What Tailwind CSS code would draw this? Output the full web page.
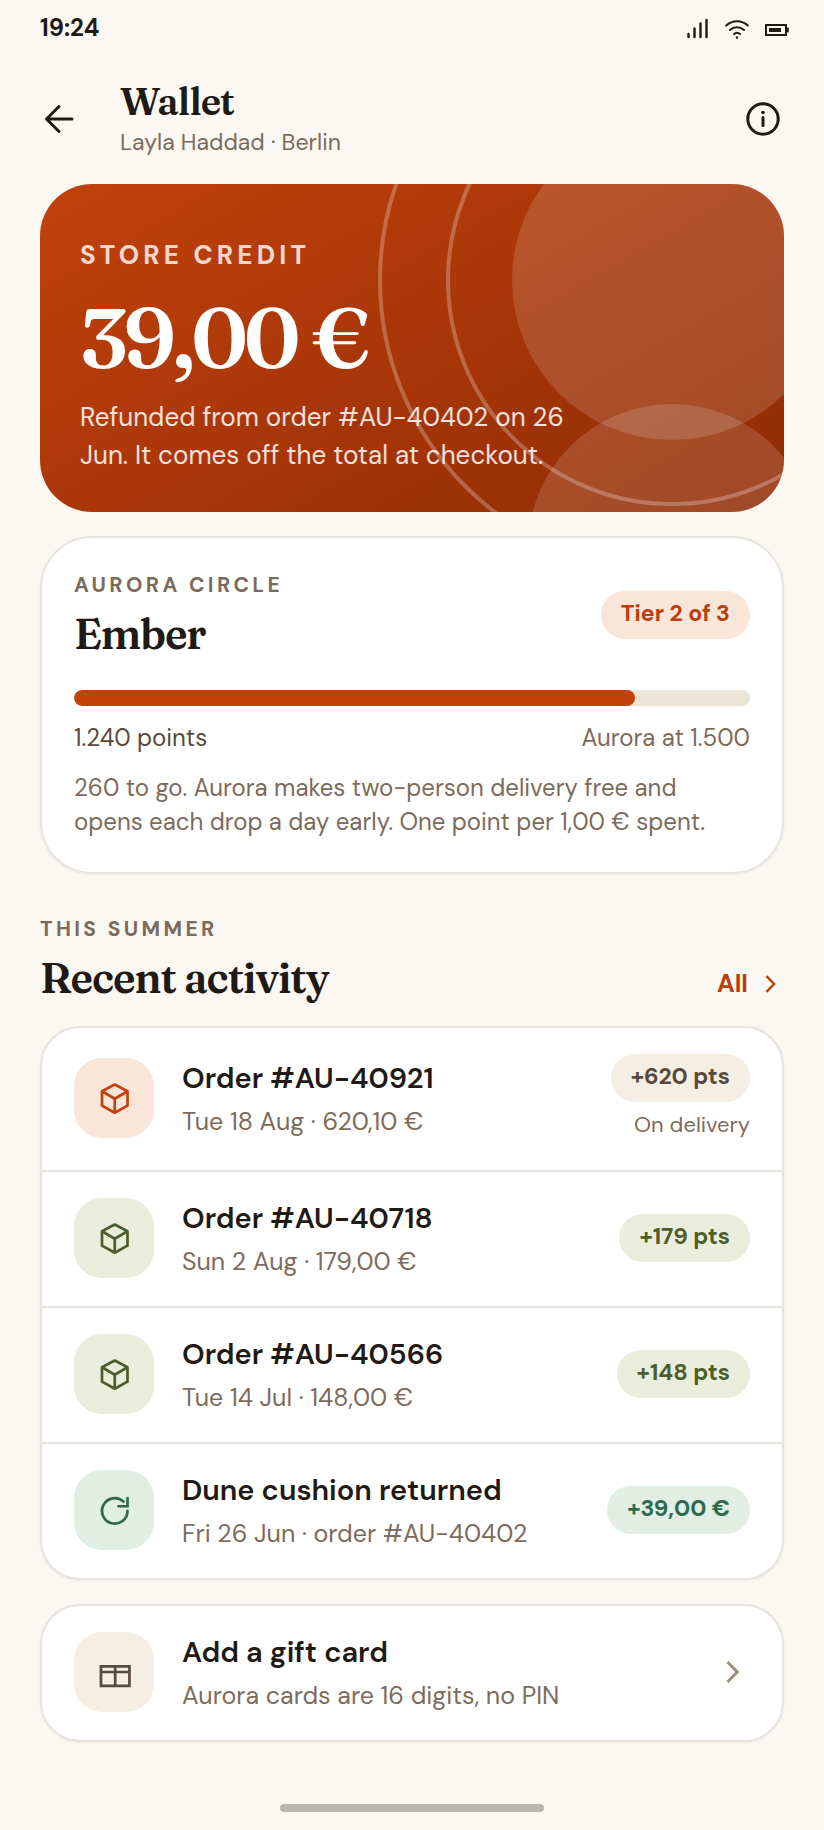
<!DOCTYPE html>
<html lang="en">
<head>
    <meta charset="UTF-8">
    <meta name="viewport" content="width=device-width, initial-scale=1.0">
    <title>Wallet</title>
    <script src="https://cdn.jsdelivr.net/npm/@tailwindcss/browser@4"></script>
</head>
<body class="flex min-h-screen flex-col bg-[#fbf8f3] font-['DM_Sans','Inter',sans-serif] text-[#1f1a14]">
    <!-- Icon shapes -->
    <svg class="hidden" aria-hidden="true">
        <symbol id="box" viewBox="0 0 24 24">
            <path d="M12.5 3 21 7.5v9.6l-8.5 4.7L4 17.1V7.5zM4 7.5l8.5 5 8.5-5M12.5 12.5v9.3" />
        </symbol>
        <symbol id="chevron" viewBox="0 0 24 24">
            <path d="m9 5.3 6.5 6.7L9 18.7" />
        </symbol>
    </svg>

    <!-- Status bar -->
    <div class="flex h-14 items-center justify-between pr-[35px] pl-10">
        <span class="text-2xl font-bold">19:24</span>
        <div class="flex items-center gap-4">
            <svg class="h-6 w-[22px]" viewBox="0 0 22 24" fill="none" stroke="currentColor" stroke-width="2.4" stroke-linecap="round">
                <path d="M1.5 21v-3M7.5 21v-8.5M13.5 21V7.5M19.5 21V4" />
            </svg>
            <svg class="h-6 w-6" viewBox="0 0 24 24" fill="none" stroke="currentColor" stroke-width="2.1" stroke-linecap="round">
                <path d="M1.2 9.6C7.5 3.8 16.5 3.8 22.8 9.6M5 14c4-3.7 10-3.7 14 0M9 18c1.8-1.5 4.2-1.5 6 0" />
                <circle cx="12" cy="21.5" r="1.2" fill="currentColor" stroke="none" />
            </svg>
            <svg class="h-6 w-6" viewBox="0 0 24 24" fill="none" stroke="currentColor" stroke-width="2">
                <path d="M1 9h20v10H1z" />
                <path d="M4 12h12v4H4z" fill="currentColor" stroke="none" />
                <path d="M22.8 12.5v3" stroke-linecap="round" />
            </svg>
        </div>
    </div>

    <!-- Header -->
    <header class="flex items-center px-10 pt-[22px] pb-[26px]">
        <button type="button" aria-label="Back" class="mr-10 flex h-10 w-10 items-center justify-center">
            <svg class="h-9 w-9" viewBox="0 0 36 36" fill="none" stroke="currentColor" stroke-width="3" stroke-linecap="round" stroke-linejoin="round">
                <path d="M30 19H4.5M17 6.5 4.5 19 17 31.5" />
            </svg>
        </button>
        <div class="flex-1">
            <h1 class="font-['Fraunces','Liberation_Serif',serif] text-[38px] leading-12 font-semibold tracking-tight">Wallet</h1>
            <p class="text-[23px] leading-8 text-[#7c6b5a]">Layla Haddad · Berlin</p>
        </div>
        <button type="button" aria-label="Information" class="flex h-10 w-10 items-center justify-center">
            <svg class="h-9 w-9" viewBox="0 0 36 36" fill="none" stroke="currentColor" stroke-width="3" stroke-linecap="round">
                <circle cx="17" cy="19" r="15.2" />
                <path d="M17 17.5v8" />
                <circle cx="17" cy="12.5" r="1.8" fill="currentColor" stroke="none" />
            </svg>
        </button>
    </header>

    <main class="flex flex-col px-10">
        <!-- Store credit -->
        <section class="relative overflow-hidden rounded-[52px] bg-linear-[150deg] from-[#c2410c] to-[#8f2c05] px-10 pt-14 pb-[38px] text-white">
            <svg class="absolute top-0 right-0 h-[328px] w-[420px]" viewBox="0 0 420 328" fill="none" aria-hidden="true">
                <circle cx="308" cy="96" r="160" fill="#fff" fill-opacity=".14" />
                <circle cx="308" cy="364" r="144" fill="#fff" fill-opacity=".14" />
                <circle cx="308" cy="96" r="224" stroke="#fff" stroke-opacity=".25" stroke-width="4" />
                <circle cx="308" cy="96" r="292" stroke="#fff" stroke-opacity=".25" stroke-width="4" />
            </svg>
            <div class="relative">
                <h2 class="text-[26px] leading-[30px] font-bold tracking-[0.16em] text-white/80 uppercase">Store credit</h2>
                <p class="mt-[18px] font-['Fraunces','Liberation_Serif',serif] text-[84px] leading-[100px] font-semibold tracking-tighter">39,00 €</p>
                <p class="mt-2.5 max-w-[520px] text-[26px] leading-[38px] text-white/85">Refunded from order #AU-40402 on 26 Jun. It comes off the total at checkout.</p>
            </div>
        </section>

        <!-- Loyalty tier -->
        <section class="mt-6 rounded-[52px] border-2 border-[#e8e4e0] bg-white px-8 pt-8 pb-[33px] shadow-sm shadow-black/5">
            <div class="flex items-center justify-between">
                <div>
                    <p class="text-[21px] leading-[30px] font-bold tracking-[0.16em] text-[#7c6b5a] uppercase">Aurora Circle</p>
                    <h2 class="mt-2 font-['Fraunces','Liberation_Serif',serif] text-[42px] leading-[52px] font-semibold tracking-tight">Ember</h2>
                </div>
                <span class="rounded-full bg-[#fae6d8] px-5 pt-1 pb-2 text-[23px] leading-9 font-bold text-[#b93e0c]">Tier 2 of 3</span>
            </div>
            <div class="mt-[30px] h-4 overflow-hidden rounded-full bg-[#ece4d6]" role="progressbar" aria-label="Points" aria-valuenow="1240" aria-valuemin="0" aria-valuemax="1500">
                <div class="h-full rounded-full bg-[#c2410c]" style="width: 83%"></div>
            </div>
            <div class="mt-4 flex justify-between text-2xl leading-8">
                <span class="text-[#574a3c]">1.240 points</span>
                <span class="text-[#7c6b5a]">Aurora at 1.500</span>
            </div>
            <p class="mt-[17px] text-2xl leading-[34px] text-[#7c6b5a]">260 to go. Aurora makes two-person delivery free and opens each drop a day early. One point per 1,00 € spent.</p>
        </section>

        <!-- Recent activity -->
        <div class="mt-10 flex items-end justify-between">
            <div>
                <p class="text-[21px] leading-[30px] font-bold tracking-[0.16em] text-[#7c6b5a] uppercase">This summer</p>
                <h2 class="mt-2 mb-0.5 font-['Fraunces','Liberation_Serif',serif] text-[42px] leading-[52px] font-semibold tracking-tight">Recent activity</h2>
            </div>
            <a href="#" class="flex items-center gap-2 pb-1 text-[25px] leading-9 font-bold text-[#b93e0c]">
                All
                <svg class="h-7 w-7" fill="none" stroke="currentColor" stroke-width="2"><use href="#chevron" /></svg>
            </a>
        </div>
        <ul class="mt-5 divide-y-2 divide-[#e8e4e0] rounded-[40px] border-2 border-[#e8e4e0] bg-white shadow-sm shadow-black/5">
            <li class="flex items-center gap-7 px-8 pt-[26px] pb-7">
                <div class="flex h-20 w-20 items-center justify-center rounded-[28px] bg-[#fae6d8] text-[#c2410c]">
                    <svg class="h-9 w-9" fill="none" stroke="currentColor" stroke-width="1.8" stroke-linejoin="round"><use href="#box" /></svg>
                </div>
                <div class="flex-1">
                    <h3 class="text-[29px] leading-10 font-semibold">Order #AU-40921</h3>
                    <p class="mt-2 text-[25px] leading-8 text-[#7c6b5a]">Tue 18 Aug · 620,10 €</p>
                </div>
                <div class="flex flex-col items-end gap-2">
                    <span class="rounded-full bg-[#f5eee3] px-5 pt-1 pb-2 text-[23px] leading-9 font-bold text-[#574a3c]">+620 pts</span>
                    <span class="pb-0.5 text-[22px] leading-[30px] text-[#7c6b5a]">On delivery</span>
                </div>
            </li>
            <li class="flex items-center gap-7 px-8 pt-[26px] pb-7">
                <div class="flex h-20 w-20 items-center justify-center rounded-[28px] bg-[#eaeddb] text-[#4d5d2b]">
                    <svg class="h-9 w-9" fill="none" stroke="currentColor" stroke-width="1.8" stroke-linejoin="round"><use href="#box" /></svg>
                </div>
                <div class="flex-1">
                    <h3 class="text-[29px] leading-10 font-semibold">Order #AU-40718</h3>
                    <p class="mt-2 text-[25px] leading-8 text-[#7c6b5a]">Sun 2 Aug · 179,00 €</p>
                </div>
                <span class="rounded-full bg-[#eaeddb] px-5 pt-1 pb-2 text-[23px] leading-9 font-bold text-[#4d5d2b]">+179 pts</span>
            </li>
            <li class="flex items-center gap-7 px-8 pt-[26px] pb-7">
                <div class="flex h-20 w-20 items-center justify-center rounded-[28px] bg-[#eaeddb] text-[#4d5d2b]">
                    <svg class="h-9 w-9" fill="none" stroke="currentColor" stroke-width="1.8" stroke-linejoin="round"><use href="#box" /></svg>
                </div>
                <div class="flex-1">
                    <h3 class="text-[29px] leading-10 font-semibold">Order #AU-40566</h3>
                    <p class="mt-2 text-[25px] leading-8 text-[#7c6b5a]">Tue 14 Jul · 148,00 €</p>
                </div>
                <span class="rounded-full bg-[#eaeddb] px-5 pt-1 pb-2 text-[23px] leading-9 font-bold text-[#4d5d2b]">+148 pts</span>
            </li>
            <li class="flex items-center gap-7 px-8 pt-[26px] pb-7">
                <div class="flex h-20 w-20 items-center justify-center rounded-[28px] bg-[#e0eee3] text-[#2c6a50]">
                    <svg class="h-9 w-9" viewBox="0 0 24 24" fill="none" stroke="currentColor" stroke-width="1.8" stroke-linecap="round">
                        <path d="M21 12.6a8.5 8.5 0 1 1-2.7-6.2M21 4v5.5h-6" />
                    </svg>
                </div>
                <div class="flex-1">
                    <h3 class="text-[29px] leading-10 font-semibold">Dune cushion returned</h3>
                    <p class="mt-2 text-[25px] leading-8 text-[#7c6b5a]">Fri 26 Jun · order #AU-40402</p>
                </div>
                <span class="rounded-full bg-[#e0eee3] px-5 pt-1 pb-2 text-[23px] leading-9 font-bold text-[#2c6a50]">+39,00 €</span>
            </li>
        </ul>

        <!-- Gift card -->
        <button type="button" class="mt-6 flex items-center gap-7 rounded-[40px] border-2 border-[#e8e4e0] bg-white px-8 pt-[26px] pb-7 text-left shadow-sm shadow-black/5">
            <span class="flex h-20 w-20 items-center justify-center rounded-[28px] bg-[#f5eee3] text-[#574a3c]">
                <svg class="h-9 w-9" viewBox="0 0 24 24" fill="none" stroke="currentColor" stroke-width="1.8">
                    <path d="M3.3 8.3h19v13h-19zM3.3 12h19M12.8 8.3v13" />
                </svg>
            </span>
            <span class="flex-1">
                <span class="block text-[29px] leading-10 font-semibold">Add a gift card</span>
                <span class="mt-2 block text-[25px] leading-8 text-[#7c6b5a]">Aurora cards are 16 digits, no PIN</span>
            </span>
            <svg class="h-9 w-9 text-[#a08c74]" fill="none" stroke="currentColor" stroke-width="2"><use href="#chevron" /></svg>
        </button>
    </main>

    <!-- Home indicator -->
    <div class="mt-auto flex justify-center pb-[18px]">
        <div class="h-2 w-66 rounded-full bg-[#b9b5ae]"></div>
    </div>
</body>
</html>
